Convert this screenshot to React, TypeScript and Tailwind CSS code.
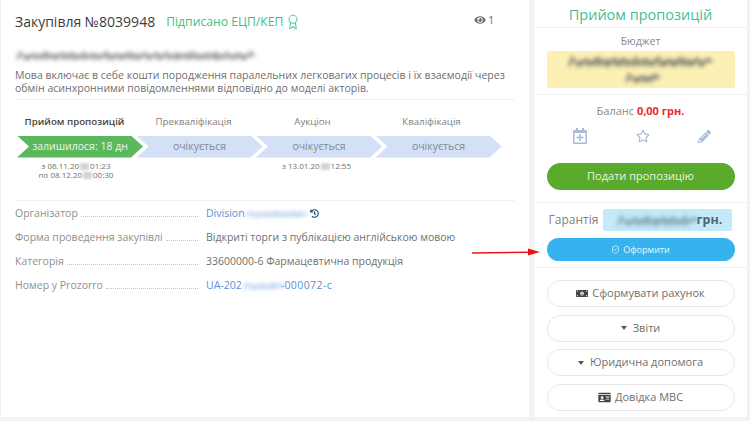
import { ShieldCheck, Award } from 'lucide-react'
import { FaEye, FaHistory, FaIdCard, FaMoneyBillAlt, FaPencilAlt, FaRegCalendarPlus, FaRegStar } from 'react-icons/fa'

const stages = [
  { title: 'Прийом пропозицій', status: 'залишилося: 18 дн', active: true },
  { title: 'Прекваліфікація', status: 'очікується', active: false },
  { title: 'Аукціон', status: 'очікується', active: false },
  { title: 'Кваліфікація', status: 'очікується', active: false },
]

// blurred-out data in the screenshot, drawn as smudged strokes
const Smudge = ({ w, h, color, className = '' }: { w: number; h: number; color: string; className?: string }) => {
  const d: string[] = []
  let x = 2
  let i = 0
  while (x < w - 6) {
    const lean = 4 + Math.abs(Math.sin(i * 1.7)) * 7
    const top = 1 + Math.abs(Math.sin(i * 2.3)) * (h * 0.3)
    d.push(`M${x.toFixed(1)} ${h - 1.5} L${(x + lean).toFixed(1)} ${top.toFixed(1)}`)
    d.push(`M${x.toFixed(1)} ${(h * 0.55).toFixed(1)} L${(x + lean + 3).toFixed(1)} ${(h * 0.45).toFixed(1)}`)
    x += 3 + Math.abs(Math.cos(i * 1.3)) * 4
    i++
  }
  return (
    <svg width={w} height={h} viewBox={`0 0 ${w} ${h}`} className={`overflow-visible blur-[2px] ${className}`}>
      <path d={d.join(' ')} stroke={color} strokeWidth="2.6" fill="none" />
    </svg>
  )
}

const DateMask = () => <span className="mx-[1px] inline-block h-[7px] w-[9px] bg-[#d4d4d4] blur-[1px] align-middle"></span>

const InfoRow = ({ label, children }: { label: string; children: React.ReactNode }) => (
  <div className="flex h-[24px] items-center">
    <div className="flex w-[183px] items-end">
      <span className="text-[#8f8f8f]">{label}</span>
      <span className="mb-[4px] ml-[3px] flex-1 border-b border-dotted border-[#c4c4c4]"></span>
    </div>
    <div className="ml-[8px] flex items-center">{children}</div>
  </div>
)

const OutlineButton = ({ children }: { children: React.ReactNode }) => (
  <button className="flex h-[27px] w-[188px] items-center justify-center gap-[4px] rounded-full border border-[#e6e6e6] bg-white text-[11px] text-[#707070]">
    {children}
  </button>
)

const Caret = () => <span className="h-0 w-0 border-x-[3.5px] border-t-[4px] border-x-transparent border-t-[#555]"></span>

export default function App() {
  return (
    <div className="relative flex h-[421px] w-[750px] gap-[5px] overflow-hidden bg-[#f2f2f2] pl-[1px] font-['Open_Sans',sans-serif] text-[#444]">
      <div className="h-[417px] w-[528px] bg-white px-[14px]">
        <div className="flex h-[44px] items-center">
          <span className="text-[14px] leading-none text-[#3c3c3c]">Закупівля №8039948</span>
          <span className="ml-[11px] text-[12.2px] font-medium text-[#3fbf85]">Підписано ЕЦП/КЕП</span>
          <Award className="ml-[2px] mb-[1px] h-[20px] w-[16px] text-[#5ccb9a]" strokeWidth={1.6} />
          <span className="ml-auto mr-[21px] mb-[4px] flex items-center gap-[2px] text-[10px] text-[#666]">
            <FaEye className="h-[10px] w-[12px] text-[#666]" />1
          </span>
        </div>
        <div className="mt-[1px] flex h-[20px] items-center">
          <Smudge w={240} h={11} color="#a0a0a0" />
        </div>
        <p className="mt-[4px] h-[30px] text-[10.55px] leading-[13px] text-[#707070]">
          Мова включає в себе кошти породження паралельних легковагих процесів і їх взаємодії через
          <br />
          обмін асинхронними повідомленнями відповідно до моделі акторів.
        </p>
        <div className="border-b border-[#f0f0f0]"></div>

        <div className="mt-[15px] grid w-[476px] grid-cols-4">
          {stages.map((s) => (
            <div key={s.title} className={`text-center text-[9.7px] ${s.active ? 'font-semibold text-[#444]' : 'text-[#808080]'}`}>
              {s.title}
            </div>
          ))}
        </div>
        <div className="mt-[6px] flex pl-[2px]">
          {stages.map((s, i) => (
            <div
              key={s.title}
              className={`flex h-[22px] w-[126px] items-center justify-center text-[10.5px] [clip-path:polygon(0_0,calc(100%-12px)_0,100%_50%,calc(100%-12px)_100%,0_100%,12px_50%)] ${
                s.active ? 'bg-[#5cb85c] text-[#e8f7e8]' : 'bg-[#d3e0f5] text-[#7f8b98]'
              } ${i > 0 ? 'ml-[-6.5px]' : ''}`}
            >
              {s.status}
            </div>
          ))}
        </div>
        <div className="mt-[3px] grid h-[39px] w-[476px] grid-cols-4 text-center text-[8px] leading-[9px] text-[#707070]">
          <div className="pl-[3px]">
            з 06.11.20
            <DateMask />
            01:23
            <br />
            по 08.12.20
            <DateMask />
            00:30
          </div>
          <div></div>
          <div className="pl-[8px]">
            з 13.01.20
            <DateMask />
            12:55
          </div>
          <div></div>
        </div>

        <div className="border-b border-[#f0f0f0]"></div>

        <div className="mt-[1px] text-[10.5px]">
          <InfoRow label="Організатор">
            <span className="text-[#5b8fd6]">Division</span>
            <Smudge w={64} h={8} color="#bdd2ee" />
            <FaHistory className="ml-[1px] h-[9px] w-[9px] text-[#1f4f82]" />
          </InfoRow>
          <InfoRow label="Форма проведення закупівлі">
            <span className="text-[#707070]">Відкриті торги з публікацією англійською мовою</span>
          </InfoRow>
          <InfoRow label="Категорія">
            <span className="text-[#707070]">33600000-6 Фармацевтична продукція</span>
          </InfoRow>
          <InfoRow label="Номер у Prozorro">
            <span className="text-[#5b8fd6]">UA-202</span>
            <Smudge w={39} h={8} color="#bdd2ee" />
            <span className="tracking-[0.4px] text-[#5b8fd6]">-000072-c</span>
          </InfoRow>
        </div>
      </div>

      <div className="flex h-[417px] w-[213px] flex-col items-center bg-white">
        <div className="flex h-[28px] w-full items-center justify-center border-b border-[#f0f0f0] pt-[2px] text-[14.5px] text-[#3fbf8f]">
          Прийом пропозицій
        </div>
        <div className="flex h-[67px] w-full flex-col items-center border-b border-[#f0f0f0] pt-[6px]">
          <span className="text-[10.5px] leading-[14px] text-[#8a8a8a]">Бюджет</span>
          <div className="mt-[3px] flex h-[37px] w-[188px] flex-col items-center justify-center gap-[4px] rounded-[2px] bg-[#fdf0b5]">
            <Smudge w={147} h={13} color="#8a8a7a" />
            <Smudge w={33} h={12} color="#8a8a7a" />
          </div>
        </div>
        <div className="mt-[8px] text-[11px] leading-[16px] text-[#8a8a8a]">
          Баланс <span className="font-bold text-[#f02a2a]">0,00 грн.</span>
        </div>
        <div className="mt-[9px] flex h-[16px] w-full items-center justify-between pl-[39px] pr-[36px] text-[#a9bad3]">
          <FaRegCalendarPlus className="h-[16px] w-[14px]" />
          <FaRegStar className="h-[14px] w-[14px]" />
          <FaPencilAlt className="h-[13px] w-[13px]" />
        </div>
        <button className="mt-[19px] h-[27px] w-[188px] shrink-0 rounded-full bg-[#5aaa2c] text-[11px] text-[#eaf5e2]">
          Подати пропозицію
        </button>
        <div className="mt-[12px] w-full border-b border-[#f0f0f0]"></div>
        <div className="mt-[6px] flex w-[188px] items-center justify-between pl-[2px] pr-[3px]">
          <span className="text-[12px] text-[#808080]">Гарантія</span>
          <div className="flex h-[22px] w-[129px] items-center rounded-[2px] bg-[#c4e9f8] pl-[13px]">
            <Smudge w={78} h={13} color="#86a8b6" />
            <span className="ml-[3px] text-[12.5px] font-bold text-[#4d6470]">грн.</span>
          </div>
        </div>
        <button className="mt-[7px] flex h-[23px] w-[188px] shrink-0 items-center justify-center gap-[3px] rounded-full bg-[#36b2ef] text-[9px] font-medium text-[#e6f6fe]">
          <ShieldCheck className="h-[9px] w-[9px]" />
          Оформити
        </button>
        <div className="mt-[6px] w-full border-b border-[#f0f0f0]"></div>
        <div className="mt-[12px] flex flex-col gap-[7.5px]">
          <OutlineButton>
            <FaMoneyBillAlt className="h-[11px] w-[12px] text-[#444]" />
            Сформувати рахунок
          </OutlineButton>
          <OutlineButton>
            <Caret />
            <span className="ml-[2px]">Звіти</span>
          </OutlineButton>
          <OutlineButton>
            <Caret />
            <span className="ml-[2px]">Юридична допомога</span>
          </OutlineButton>
          <OutlineButton>
            <FaIdCard className="h-[11px] w-[13px] text-[#444]" />
            Довідка МВС
          </OutlineButton>
        </div>
      </div>

      {/* annotation arrow on top of the page */}
      <svg className="absolute left-[470px] top-[245px]" width="72" height="14" viewBox="0 0 72 14">
        <path d="M2 8 L58 7.2" stroke="#e8141c" strokeWidth="1.4" fill="none" />
        <path d="M70 7 L58 3.5 L58 10.5 Z" fill="#e8141c" />
      </svg>
    </div>
  )
}
